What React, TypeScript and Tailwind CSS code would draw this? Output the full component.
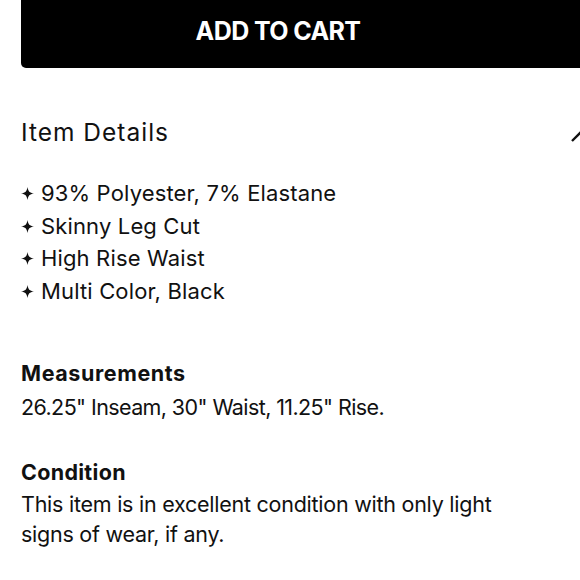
const details = [
  "93% Polyester, 7% Elastane",
  "Skinny Leg Cut",
  "High Rise Waist",
  "Multi Color, Black",
];

export default function App() {
  return (
    <div
      className="w-[580px] h-[580px] overflow-hidden bg-white text-[#111]"
      style={{ fontFamily: "Inter, 'Liberation Sans', sans-serif" }}
    >
      <div className="pl-[21px]">
        <button className="w-[600px] h-[68px] bg-black rounded-b-[5px] flex items-center justify-center pr-[86px] pb-[4px]">
          <span className="text-white font-bold text-[25px] tracking-[-0.6px]">ADD TO CART</span>
        </button>

        <div className="flex items-center justify-between mt-[44px] h-[40px]">
          <h2 className="text-[24.5px] font-normal tracking-[1px]">Item Details</h2>
          <svg width="24" height="24" viewBox="0 0 24 24" className="mr-[-14px] mt-[6px]">
            <path d="M2 18 L12 8 L22 18" fill="none" stroke="#111" strokeWidth="2.4" />
          </svg>
        </div>

        <ul className="mt-[25px] text-[22px] leading-[32.7px] tracking-[0.15px]">
          {details.map((d) => (
            <li key={d} className="flex items-center">
              <svg width="13" height="13" viewBox="0 0 12 12" className="mr-[7px] shrink-0">
                <path d="M6 0 C6.7 4.2 7.8 5.3 12 6 C7.8 6.7 6.7 7.8 6 12 C5.3 7.8 4.2 6.7 0 6 C4.2 5.3 5.3 4.2 6 0 Z" fill="#111" />
              </svg>
              {d}
            </li>
          ))}
        </ul>

        <div className="mt-[48px] text-[21.5px] leading-[34px]">
          <div className="font-bold tracking-[0.6px]">Measurements</div>
          <div className="tracking-[-0.6px]">26.25" Inseam, 30" Waist, 11.25" Rise.</div>
        </div>

        <div className="mt-[33px] text-[21.5px] leading-[30px]">
          <div className="font-bold tracking-[0.3px]">Condition</div>
          <div className="w-[500px] mt-[2px] tracking-[-0.25px]">
            This item is in excellent condition with only light signs of wear, if any.
          </div>
        </div>
      </div>
    </div>
  );
}
